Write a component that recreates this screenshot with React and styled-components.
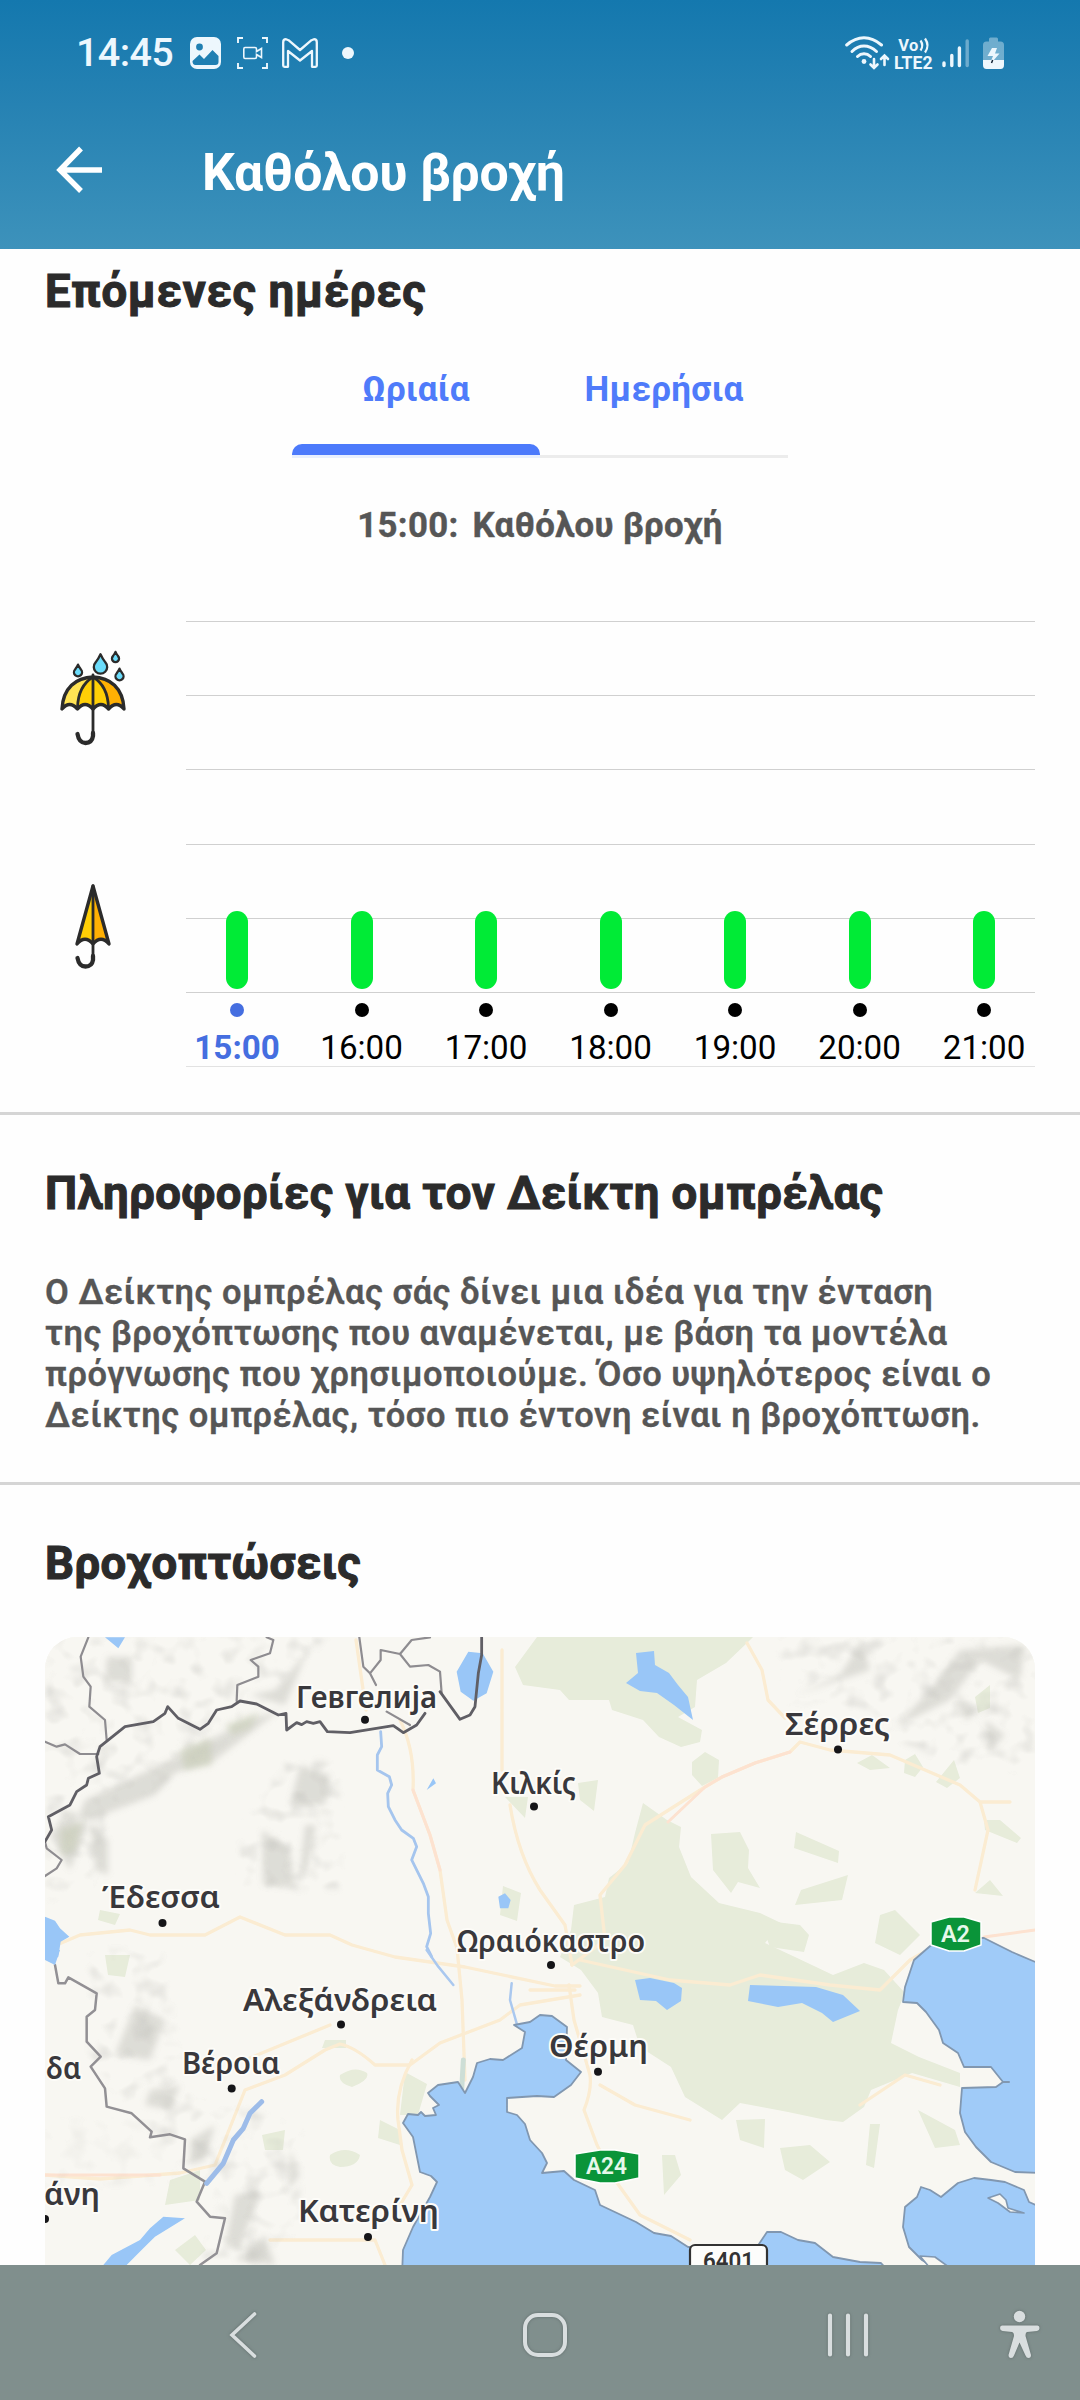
import React from "react";
import styled, { createGlobalStyle, css } from "styled-components";

const GlobalStyle = createGlobalStyle`
  *, *::before, *::after { box-sizing: border-box; }
  body { margin: 0; background: #fff; font-family: Roboto, "Noto Sans", sans-serif; }
  h1, h2, p { margin: 0; }
  button { border: 0; padding: 0; background: none; font: inherit; }
  svg { display: block; flex: none; }
`;

const Screen = styled.div`
  width: 1080px;
  height: 2400px;
  display: flex;
  flex-direction: column;
  overflow: hidden;
  background: #fefefe;
`;

/* ---------- header ---------- */

const Header = styled.header`
  flex: none;
  height: 249px;
  background: linear-gradient(#1478ae, #2682b3 42%, #3d92bb);
  color: #fff;
`;

const StatusBar = styled.div`
  height: 106px;
  padding: 0 76px 0 76px;
  display: flex;
  justify-content: space-between;
  align-items: center;
  color: #edf7fd;
`;

const StatusGroup = styled.div`
  display: flex;
  align-items: center;
  gap: ${(p) => p.$gap}px;
`;

const Spaced = styled.span`
  margin-left: ${(p) => p.$left}px;
`;

const Clock = styled.span`
  width: 98px;
  font-size: 39.5px;
  line-height: 46px;
  font-weight: 500;
  letter-spacing: -0.6px;
`;

const NotificationDot = styled.span`
  width: 12px;
  height: 12px;
  margin-left: 8px;
  border-radius: 50%;
  background: currentColor;
`;

const TitleRow = styled.div`
  height: 143px;
  padding: 0 56px;
  display: flex;
  align-items: flex-start;
`;

const BackButton = styled.button`
  width: 146px;
  padding-top: 40px;
`;

const PageTitle = styled.h1`
  padding-top: 36px;
  font-size: 51.8px;
  line-height: 62px;
  font-weight: 700;
  letter-spacing: -0.3px;
  white-space: nowrap;
`;

/* ---------- content ---------- */

const Content = styled.main`
  flex: 1;
  min-height: 0;
  overflow: hidden;
`;

const Section = styled.section`
  height: ${(p) => p.$height}px;
  padding: ${(p) => p.$top}px 45px 0;
  ${(p) =>
    p.$divided &&
    css`
      border-bottom: 3px solid #d5d5d5;
    `}
`;

const SectionTitle = styled.h2`
  font-size: 45.5px;
  line-height: 54px;
  font-weight: 700;
  letter-spacing: ${(p) => p.$tracking || 0.46}px;
  color: #2b2b2b;
  -webkit-text-stroke: 1.1px #2b2b2b;
  white-space: nowrap;
`;

const Tabs = styled.div`
  width: 496px;
  height: 110px;
  margin: 29px auto 0 247px;
  display: grid;
  grid-template-columns: 1fr 1fr;
`;

const Tab = styled.button`
  display: flex;
  flex-direction: column;
  align-items: center;
  justify-content: space-between;
  border-bottom: 3px solid ${(p) => (p.$active ? "#e8effe" : "#ececec")};
  padding-top: 21px;
  font-size: 35px;
  line-height: 41px;
  font-weight: 700;
  letter-spacing: 0.3px;
  color: #4f7bfa;

  &::after {
    content: "";
    width: 100%;
    height: 11px;
    border-radius: 10px 10px 0 0;
    background: ${(p) => (p.$active ? "#4c7afb" : "transparent")};
  }
`;

const Caption = styled.p`
  margin-top: 47px;
  height: 41px;
  display: flex;
  justify-content: center;
  gap: 14px;
  font-size: 34.8px;
  line-height: 41px;
  font-weight: 700;
  letter-spacing: 0.3px;
  color: #565656;
  -webkit-text-stroke: 0.4px #565656;
`;

const Chart = styled.div`
  margin-top: 75px;
  display: grid;
  grid-template-columns: 141px 849px;
`;

const Scale = styled.div`
  padding: 29px 0 0 14px;
  display: flex;
  flex-direction: column;
  gap: 136px;
`;

const Plot = styled.div`
  height: 447px;
  display: grid;
  grid-template-columns: 849px;
`;

const GridLines = styled.div`
  grid-area: 1 / 1;
  display: grid;
  grid-auto-rows: 74.2px;
  height: 447px;
  overflow: hidden;
`;

const GridLine = styled.span`
  border-top: 1px solid ${(p) => (p.$faint ? "#e2e2e2" : "#d0d0d0")};
`;

const Hours = styled.div`
  grid-area: 1 / 1;
  width: 871.5px;
  margin: 290px 0 0 -11.2px;
  display: grid;
  grid-template-columns: repeat(7, 1fr);
`;

const Hour = styled.div`
  display: flex;
  flex-direction: column;
  align-items: center;
  font-size: 33.2px;
  line-height: 38px;
  color: ${(p) => (p.$active ? "#456ee0" : "#000")};
  font-weight: ${(p) => (p.$active ? 700 : 400)};
`;

const Bar = styled.span`
  width: 22px;
  height: 78px;
  border-radius: 11px;
  background: #00eb36;
`;

const HourDot = styled.span`
  width: 14px;
  height: 14px;
  margin: 14px 0 12px;
  border-radius: 50%;
  background: currentColor;
`;

const Paragraph = styled.p`
  margin-top: 51px;
  font-size: 34.5px;
  line-height: 41px;
  font-weight: 600;
  letter-spacing: 0.51px;
  color: #565656;
  -webkit-text-stroke: 0.3px #565656;
  white-space: pre;
`;

const MapCard = styled.div`
  width: 990px;
  height: 628px;
  margin-top: 46px;
  overflow: hidden;
  border-radius: 32px 32px 0 0;
  background: #f8f7f2;
`;

/* ---------- system navigation ---------- */

const NavBar = styled.nav`
  flex: none;
  height: 135px;
  padding: 5px 36px 0 227px;
  display: flex;
  align-items: center;
  background: #808f8d;

  svg { filter: drop-shadow(0 0 1.5px rgba(60, 70, 70, 0.5)); }
`;

const NavButton = styled.button`
  width: ${(p) => p.$w}px;
`;

/* ---------- icons ---------- */

const ImageIcon = () => (
  <svg width="31" height="32" viewBox="0 0 31 32">
    <rect width="31" height="32" rx="7" fill="currentColor" />
    <circle cx="9.5" cy="10" r="3.4" fill="#1f7fb2" />
    <path d="M2.5 24 L9.5 17.5 L14 22 L22.5 13 L28.5 19 V25 Q28.5 28 25.5 28 H5.5 Q2.5 28 2.5 24Z" fill="#1f7fb2" />
  </svg>
);

const ScreenRecordIcon = () => (
  <svg width="31" height="32" viewBox="0 0 31 32" fill="none" stroke="currentColor" strokeWidth="1.9">
    <path d="M1 6V1H6M25 1H30V6M30 26V31H25M6 31H1V26" />
    <path d="M8 10.5H18Q19.5 10.5 19.5 12V14.5L24.5 11.5V20.5L19.5 17.5V20Q19.5 21.5 18 21.5H8Q6.8 21.5 6.8 20V12Q6.8 10.5 8 10.5Z" strokeWidth="1.6" />
  </svg>
);

const MailIcon = () => (
  <svg width="36" height="30" viewBox="0 0 36 30" fill="none" stroke="currentColor" strokeWidth="2.3" strokeLinejoin="round">
    <path d="M1.2 27.5V4.2Q1.2 1.2 4 1.2L6.5 2.2L18 12L29.5 2.2L32 1.2Q34.8 1.2 34.8 4.2V27.5Q34.8 28.8 33.5 28.8H30V13L18 22.5L6 13V28.8H2.5Q1.2 28.8 1.2 27.5Z" />
  </svg>
);

const WifiIcon = () => (
  <svg width="45" height="34" viewBox="0 0 45 34" fill="none" stroke="currentColor" strokeLinecap="round">
    <path d="M1.7 9 Q10 1.8 19 1.8 T36.5 9" strokeWidth="3" />
    <path d="M7 15.5 Q12.5 10 19 10 T31.5 15.5" strokeWidth="3" />
    <path d="M12.5 20.5 Q15.3 17.8 19 17.8 T25.5 20.5" strokeWidth="3" />
    <circle cx="19" cy="25.5" r="2.4" fill="currentColor" stroke="none" />
    <path d="M29 23V31M25.5 28.5L29 32L32.5 28.5M39.5 29V20M36 23L39.5 19.5L43 23" strokeWidth="2.6" />
  </svg>
);

const VolteIcon = () => (
  <svg width="39" height="40" viewBox="0 -3 39 40" fill="currentColor" fontFamily="Roboto, sans-serif" fontWeight="700">
    <text x="4.3" y="15" fontSize="16.5" textLength="20">Vo</text>
    <path d="M26.5 4.5Q30 9.5 26.5 14.5M31 2.5Q36 9.5 31 16.5" fill="none" stroke="currentColor" strokeWidth="2.2" />
    <text x="0" y="32.5" fontSize="17.5" textLength="38.5" lengthAdjust="spacingAndGlyphs">LTE2</text>
  </svg>
);

const SignalIcon = () => (
  <svg width="28" height="30" viewBox="0 0 28 30" stroke="currentColor" strokeWidth="3.4" strokeLinecap="round">
    <path d="M2 25V27.5M9.8 17.5V27.5M17.4 10V27.5" />
    <path d="M25.2 3V27.5" opacity=".38" />
  </svg>
);

const BatteryIcon = () => (
  <svg width="21" height="32" viewBox="0 0 21 32" fill="currentColor">
    <path d="M6 4.5V2Q6 .5 7.5 .5H13.5Q15 .5 15 2V4.5H17.5Q21 4.5 21 8V23H0V8Q0 4.5 3.5 4.5Z" opacity=".4" />
    <path d="M0 23H21V28Q21 32 17.5 32H3.5Q0 32 0 28Z" />
    <path d="M9 11H14L12 16.5H16.5L10 24H8L10 19H4.5Z" />
    <path d="M8.5 26L9.7 23" stroke="#123" strokeWidth="1.5" />
  </svg>
);

const ArrowBackIcon = () => (
  <svg width="47" height="47" viewBox="0 0 47 47" fill="none" stroke="#fff" strokeWidth="5.4">
    <path d="M25 2.5L4 24L25 45M4.5 24H46" />
  </svg>
);

const Drop = ({ x, y, s }) => (
  <path
    transform={`translate(${x} ${y}) scale(${s})`}
    d="M0 -9Q1.5 -5.5 4.5 -1.5A6.2 6.2 0 1 1 -4.5 -1.5Q-1.5 -5.5 0 -9Z"
    fill="#6bdcfb"
    stroke="#2b2b2b"
    strokeWidth={2.3 / s}
    strokeLinejoin="round"
  />
);

const OpenUmbrellaIcon = () => (
  <svg width="68" height="96" viewBox="0 0 68 96" fill="none" strokeLinecap="round" strokeLinejoin="round">
    <path d="M3 59Q3 29 34 27Q65 29 65 59Q58 51 50 59Q42 51 34 59Q26 51 18 59Q10 51 3 59Z" fill="#ffcf06" />
    <path d="M3 59Q3 30 34 27Q19 36 18 59Q10 51 3 59Z" fill="#ffe354" />
    <path d="M34 27Q65 30 65 59Q58 51 50 59Q49 36 34 27Z" fill="#ffb003" />
    <g stroke="#2b2b2b">
      <path d="M3 59C4 38 17 27.5 34 27C51 27.5 64 38 65 59Q57.5 50 49.5 59Q42 50 34 59Q26 50 18.5 59Q10.5 50 3 59Z" strokeWidth="3.4" />
      <path d="M18.5 58Q19 36 34 27Q49 36 49.5 58" strokeWidth="2.8" />
      <path d="M34 25V84" strokeWidth="2.8" />
      <path d="M34 83V86Q33 93 26.5 93T18.5 84" strokeWidth="4.3" />
    </g>
    <Drop x={41.5} y={14} s={1.08} />
    <Drop x={19} y={20.5} s={0.65} />
    <Drop x={56.5} y={7} s={0.57} />
    <Drop x={60.5} y={24.5} s={0.65} />
  </svg>
);

const ClosedUmbrellaIcon = () => (
  <svg width="68" height="88" viewBox="0 0 68 88" fill="none" strokeLinecap="round" strokeLinejoin="round">
    <path d="M34 4L18 62Q26 54 34 62Z" fill="#ffcf06" />
    <path d="M34 4L50 62Q42 54 34 62Z" fill="#ffb003" />
    <g stroke="#2b2b2b">
      <path d="M34 4L18 62Q26 52.5 34 62Q42 52.5 50 62Z" strokeWidth="3.4" />
      <path d="M34 4V76" strokeWidth="2.8" />
      <path d="M34 74V78Q33 84.5 26.5 84.5T18.5 76" strokeWidth="4.3" />
    </g>
  </svg>
);

/* ---------- map ---------- */

const cities = [
  ["Гевгелија", 296, 1707.5, 141, 365, 1719.7],
  ["Κιλκίς", 491, 1794, 85, 534, 1806.5],
  ["Σέρρες", 785, 1735, 105, 838, 1749.5],
  ["Έδεσσα", 102, 1907.5, 118, 162.5, 1923],
  ["Ωραιόκαστρο", 457, 1952, 188, 551, 1965],
  ["Αλεξάνδρεια", 243, 2010.5, 194, 341, 2024.5],
  ["Βέροια", 182, 2074, 98, 231.7, 2088.5],
  ["δα", 46, 2079, 35, 0, 0],
  ["Θέρμη", 549, 2057, 99, 598, 2071.7],
  ["άνη", 44, 2205, 56, 45, 2219],
  ["Κατερίνη", 298, 2221.5, 141, 368, 2237],
];

const MapLabels = styled.g`
  font-family: "Noto Sans", sans-serif;
  font-size: 30.5px;
  font-weight: 600;
  fill: #39383c;
  stroke: #fdfcf8;
  stroke-width: 4px;
  stroke-linejoin: round;
  paint-order: stroke;
`;

const ShieldText = styled.text`
  font-family: Roboto, sans-serif;
  font-size: 24px;
  font-weight: 600;
  fill: ${(p) => p.$color};
`;

const Tile = styled.g`
  & path { vector-effect: non-scaling-stroke; }
`;

const TerrainMap = () => (
  <svg width="990" height="628" viewBox="45 1637 990 628" fill="none" strokeLinejoin="round" strokeLinecap="round">
    <defs>
      <filter id="soft" x="-5%" y="-5%" width="110%" height="110%"><feGaussianBlur stdDeviation="3" /></filter>
      <filter id="slight" x="-5%" y="-5%" width="110%" height="110%"><feGaussianBlur stdDeviation="0.7" /></filter>
      <filter id="grain" x="0" y="0" width="100%" height="100%">
        <feTurbulence type="fractalNoise" baseFrequency="0.045 0.05" numOctaves="2" seed="8" />
        <feColorMatrix values="0 0 0 0 .5  0 0 0 0 .5  0 0 0 0 .47  2.2 0 0 0 -1.08" />
      </filter>
      <mask id="hills">
        <g filter="url(#soft)" fill="#fff">
          <path d="M45 1637H330L265 1700L200 1765L110 1810L90 1890L45 1900Z" />
          <path d="M285 1760H340V1890H240V1830Z" />
          <path d="M780 1637H1035V1770H960L900 1740L870 1710L780 1700Z" />
          <path d="M90 1950H160L190 2100L250 2110L300 2130V2230L270 2265H200L220 2200L150 2130L90 2060Z" />
          <path d="M45 2120H150L180 2180L45 2190Z" opacity=".5" />
        </g>
      </mask>
    </defs>
    <rect x="45" y="1637" width="990" height="628" fill="#f8f7f2" />

    <g filter="url(#slight)">
      <g fill="#e7ecda">
        <path d="M537 1637L515 1667L523 1685L560 1690L569 1700L609 1700L612 1710L643 1720L659 1737L681 1747L700 1742L702 1730L678 1717L695 1707L697 1680L726 1663L747 1643L753 1637Z" />
        <path d="M643 1803L667 1820L681 1827L679 1847L691 1877L719 1903L760 1913L781 1923L765 1943L795 1957L833 1975L864 1963L884 1970L905 1993L898 2010L891 2043L919 2057L960 2073V2087L912 2073L871 2090L864 2107L843 2122L826 2120L788 2112L740 2103L722 2120L685 2097L671 2067L640 2047L633 2025L602 2017L598 1993L581 1970L560 1957L571 1930L574 1905L605 1897L609 1878L628 1863L635 1833Z" />
        <path d="M711 1834L740 1832L749 1850L748 1868L760 1888L738 1882L731 1893L713 1870Z" />
        <path d="M796 1832L839 1851L838 1863L794 1848Z" />
        <path d="M801 1890L848 1875L842 1900L795 1905Z" />
        <path d="M760 1920L800 1925L809 1935L804 1952L770 1947ZM880 1915L895 1910L920 1935L900 1955L875 1943Z" />
        <path d="M857 1763L872 1755L890 1768L870 1770ZM905 1760L915 1754L923 1767L915 1777L904 1773ZM936 1782L954 1760L960 1778L947 1788ZM692 1762L705 1752L719 1760L718 1778L702 1786L692 1775ZM984 1820L1000 1820L1021 1838L1017 1843L985 1830ZM975 1893L990 1880L1003 1896Z" />
        <path d="M578 1783L598 1780L594 1811L580 1800ZM736 2120L765 2119L764 2148L740 2140ZM780 2148L810 2145L830 2162L803 2180L785 2170ZM870 2124L880 2124L874 2168L866 2165ZM662 2155L675 2155L681 2175L664 2195ZM918 2110L955 2130L960 2145L935 2148Z" />
        <path d="M340 2075Q355 2065 367 2073Q370 2080 352 2087Q338 2083 340 2075ZM330 2155Q345 2145 360 2155Q358 2167 340 2167Q328 2165 330 2155ZM262 2135L285 2130L283 2150L265 2150ZM405 2072L427 2084L418 2115L400 2115ZM380 2120L400 2130V2145L378 2138ZM325 2040L346 2040V2048L322 2048ZM503 1886L521 1893L517 1921L500 1915ZM105 1955L130 1955L125 1977L108 1975ZM175 2250L195 2235L206 2250L190 2265ZM505 1797L528 1797L525 1818Z" />
        <path d="M100 1910L120 1914L115 1925L98 1920ZM975 1697L990 1685V1708L978 1713ZM170 2180L200 2170V2200L165 2205Z" />
      </g>

      <g stroke="#fbecd2" strokeWidth="3.3">
        <path d="M45 1950L80 1935L130 1930L150 1935H205L240 1917L285 1935H330L352 1945L395 1957L465 1967L555 1986H580" />
        <path d="M45 2175L100 2179L180 2173L215 2165L245 2090L285 2075L325 2050L340 2044Q355 2047 375 2065H410L440 2043L500 2020L520 2005L580 1995" />
        <path d="M245 2060L330 2025M400 1720Q415 1750 413 1790L430 1835L440 1870L447 1920L457 1948L462 2000L465 2080M412 2060Q395 2090 398 2120L402 2150L412 2185L400 2205M510 1805Q518 1855 540 1890L565 1925L572 1965M569 1985L574 2020L590 2075Q592 2090 584 2110L597 2145L615 2180L640 2215L690 2240" />
        <path d="M502 1650V1770M356 1640L366 1710M600 2085L635 2105L690 2120M530 1990H575" />
        <path d="M572 1965L605 1940L600 1895L625 1865L645 1825L705 1787L722 1777L755 1763L790 1752L800 1742L830 1750L890 1755L960 1785L980 1802H1010M980 1802L988 1830L975 1890" />
        <path d="M580 1960L670 1980L730 1985L760 1975L830 1985L880 1990L910 1960L940 1943" />
        <path d="M747 1643L762 1670L768 1700L785 1718M270 2240L375 2240L385 2265M860 2105L905 2075L940 2085" />
      </g>
      <g stroke="#fde2d0" strokeWidth="3">
        <path d="M668 1822L705 1787L722 1777L755 1763L790 1752M413 1790L430 1835L440 1870M984 1937L1035 1930" />
        <path d="M45 2175L160 2175" />
      </g>

      <g fill="#bdbdb6" opacity=".45" filter="url(#soft)">
        <path d="M315 1637L300 1660L275 1690L250 1695L285 1705L310 1645ZM250 1720L215 1737L160 1765L85 1800L75 1825L155 1795L175 1773L215 1760L280 1710ZM50 1835L70 1810L88 1825L70 1870ZM90 1825L108 1840V1875L96 1870ZM107 1657H132V1682H105ZM300 1765L330 1775L325 1805H290ZM262 1830L290 1850L295 1888L263 1885ZM305 1825H316L307 1872H300Z" />
        <path d="M862 1640L840 1675L795 1695L870 1670ZM960 1650L1025 1645L1020 1680L980 1660L950 1700L895 1727L930 1690ZM985 1720L1005 1735L990 1750ZM955 1690L975 1715L965 1720Z" />
        <path d="M135 2005L165 2020L150 2060L115 2055ZM150 2090L180 2085L170 2110L145 2105ZM190 2140L215 2125L205 2160L190 2165ZM235 2195L260 2190L240 2250L225 2245ZM290 2150L300 2175L288 2190ZM235 2260L265 2235L275 2265Z" />
      </g>
      <rect x="45" y="1637" width="990" height="628" filter="url(#grain)" mask="url(#hills)" opacity=".45" />
      <g fill="#c7ccb6" opacity=".6" filter="url(#soft)">
        <path d="M60 1830L82 1822L75 1850L62 1855ZM180 1750L210 1738L212 1765L185 1770ZM225 1725L260 1712L250 1728L232 1735Z" />
      </g>

      <Tile transform="translate(40 1630) scale(.33333)">
        <g stroke="#8e8c90" strokeWidth="2.2">
          <path d="M145 22L122 80L130 140L152 170L148 230L195 270L200 330M15 335L50 350L75 343L120 372H175M590 213L592 165L655 140V110L632 90L690 70L700 30L680 22" />
          <path d="M958 22L970 110L990 130L1008 165M990 130L1022 90V60L1080 72L1110 110L1165 105L1200 125L1205 190M1080 72L1115 30L1170 22M1040 245L1110 285M15 635L20 655L65 690L50 715L15 738" />
        </g>
        <g fill="#99c6f7">
          <path d="M1285 65L1328 70L1360 125L1340 190L1300 212L1262 185L1250 125ZM195 22H255L235 55L215 38ZM15 860L45 872L60 895L88 920L62 935L55 980L40 990H15Z" />
          <path d="M1375 800L1395 790L1412 810L1405 835H1380ZM1160 480L1180 445L1188 460Z" />
        </g>
        <path d="M1022 305L1025 350L1012 375V420L1048 440L1055 465L1043 490L1045 530L1065 570L1085 600L1120 625L1130 650L1115 690L1150 760L1165 800V850L1172 910L1160 950L1175 980" stroke="#a5c5ee" strokeWidth="2.8" />
        <g stroke="#605e65" strokeWidth="2.8">
          <path d="M15 635L35 600L25 560L90 525L110 485L140 465L145 445L178 430L170 380L180 350L255 290L340 275L375 250L383 230L415 265L480 298L505 280L530 240L575 230L600 213L650 222L715 255L738 250L740 300L770 278L785 284L800 275L820 280L840 275L862 305L930 308L1060 287L1090 308L1130 285L1155 250" />
          <path d="M1200 185L1260 268L1290 255L1305 230L1315 130L1325 75V22" />
        </g>
      </Tile>

      <path d="M636 1653L654 1651L655 1665L669 1673L678 1685L688 1697L693 1720L674 1705L657 1693L640 1691L626 1683L638 1673Z" fill="#99c6f7" />
      <path d="M635 1980L650 1978L674 1983L682 1988L681 2001L667 2010L656 2001L640 2000ZM750 1985L816 1987L843 1995L860 2011L833 2022L822 2013L802 2003L778 2007L748 2001Z" fill="#99c6f7" />

      <Tile transform="translate(40 1950) scale(.33333)">
        <path d="M45 45L55 100H75L85 82L170 130L165 180L140 200V275L182 320L152 350L195 415L200 470L275 490L335 545L330 562L390 553L435 568L430 655L495 695L470 755L510 800L555 805L530 910L480 945" stroke="#929094" strokeWidth="2.5" />
        <path d="M15 0H60L45 45L15 30Z" fill="#99c6f7" />
        <path d="M665 455L630 490L610 535L580 570L550 640L500 700" stroke="#9dbce9" strokeWidth="5" />
        <path d="M435 805L370 800L330 835L300 870L215 915L190 945H260L310 895L345 860Z" fill="#99c6f7" />
        <path d="M1160 0L1195 50L1240 105M1415 100L1410 150L1430 220" stroke="#aac8ef" strokeWidth="2.5" />
        <path d="M1270 330L1265 420" stroke="#cdded6" strokeWidth="5" />
      </Tile>

      <g fill="#a0cbf8" stroke="#8197b0" strokeWidth="1.8">
        <path d="M402 2275L403 2250L413 2227L430 2197L437 2182L431 2176L420 2172L413 2137L403 2123L408 2114L418 2115L421 2112L425 2116L436 2115L433 2108L439 2105L430 2096L428 2093L438 2085L458 2082L465 2093L473 2077L477 2063L490 2059L503 2060L522 2048L525 2032L514 2025L530 2022L540 2015L552 2016L567 2027L566 2060L581 2072L571 2085L554 2097L537 2096L507 2098V2112L517 2115L525 2124L530 2140L542 2153L547 2163L542 2173L564 2171L574 2180L595 2190L600 2205L636 2222L654 2233L671 2236L688 2247H757L767 2232L781 2232L798 2240L815 2243L833 2257L860 2262L881 2263L892 2275Z" />
        <path d="M1040 1964L1012 1952L984 1938H940L929 1947L914 1960L905 1987L903 2002L917 2003L926 2012L939 2030L943 2043L958 2053L964 2067H978L991 2067L1003 2082L996 2087L962 2088L960 2113L965 2132L976 2147L991 2162L1015 2172L1040 2173Z" />
        <path d="M1040 2207L1029 2202L1024 2190L1005 2182L991 2180L974 2178L958 2183L941 2197L930 2190L921 2187L917 2197L905 2207L903 2227L909 2247L922 2260L946 2275H1040Z" />
      </g>
      <path d="M988 2198L1000 2194L1006 2200L1008 2208L1024 2213L1010 2212L998 2203ZM920 2256L935 2257L950 2268H930Z" fill="#f8f7f2" stroke="#8197b0" strokeWidth="1.6" />
      <path d="M1003 2082L1009 2082" stroke="#8197b0" strokeWidth="2" />
    </g>

    <MapLabels>
      {cities.map(([name, x, y, width]) => (
        <text key={name} x={x} y={y} textLength={width} lengthAdjust="spacingAndGlyphs">{name}</text>
      ))}
    </MapLabels>
    {cities.map(([name, , , , cx, cy]) => (
      <circle key={name} cx={cx} cy={cy} r="4" fill="#151518" />
    ))}

    <path d="M931 1922L949 1917H964L981 1922V1945L964 1951H949L931 1945Z" fill="#0a9439" stroke="#fff" strokeWidth="1.5" />
    <ShieldText x="941" y="1941.5" textLength="29" lengthAdjust="spacingAndGlyphs" $color="#e6f8ea">A2</ShieldText>
    <path d="M575 2154L600 2150H615L639 2154V2178L615 2183H600L575 2178Z" fill="#0a9439" stroke="#fff" strokeWidth="1.5" />
    <ShieldText x="586" y="2174" textLength="41" lengthAdjust="spacingAndGlyphs" $color="#e6f8ea">A24</ShieldText>
    <rect x="690" y="2245" width="77" height="36" rx="5" fill="#fdfdfb" stroke="#333" strokeWidth="2.2" />
    <ShieldText x="703" y="2269" textLength="51" lengthAdjust="spacingAndGlyphs" $color="#333">6401</ShieldText>
  </svg>
);

/* ---------- page ---------- */

const hours = ["15:00", "16:00", "17:00", "18:00", "19:00", "20:00", "21:00"];

const about = `Ο Δείκτης ομπρέλας σάς δίνει μια ιδέα για την ένταση
της βροχόπτωσης που αναμένεται, με βάση τα μοντέλα
πρόγνωσης που χρησιμοποιούμε. Όσο υψηλότερος είναι ο
Δείκτης ομπρέλας, τόσο πιο έντονη είναι η βροχόπτωση.`;

export default function App() {
  return (
    <Screen>
      <GlobalStyle />
      <Header>
        <StatusBar>
          <StatusGroup $gap={16}>
            <Clock>14:45</Clock>
            <ImageIcon />
            <ScreenRecordIcon />
            <Spaced $left={-2}><MailIcon /></Spaced>
            <NotificationDot />
          </StatusGroup>
          <StatusGroup $gap={4}>
            <WifiIcon />
            <VolteIcon />
            <Spaced $left={5}><SignalIcon /></Spaced>
            <Spaced $left={9}><BatteryIcon /></Spaced>
          </StatusGroup>
        </StatusBar>
        <TitleRow>
          <BackButton aria-label="Πίσω"><ArrowBackIcon /></BackButton>
          <PageTitle>Καθόλου βροχή</PageTitle>
        </TitleRow>
      </Header>

      <Content>
        <Section $height={866} $top={16} $divided>
          <SectionTitle $tracking={0.7}>Επόμενες ημέρες</SectionTitle>
          <Tabs>
            <Tab $active>Ωριαία</Tab>
            <Tab>Ημερήσια</Tab>
          </Tabs>
          <Caption><span>15:00:</span><span>Καθόλου βροχή</span></Caption>
          <Chart>
            <Scale>
              <OpenUmbrellaIcon />
              <ClosedUmbrellaIcon />
            </Scale>
            <Plot>
              <GridLines>
                {[0, 1, 2, 3, 4, 5, 6].map((n) => (
                  <GridLine key={n} $faint={n === 6} />
                ))}
              </GridLines>
              <Hours>
                {hours.map((hour, i) => (
                  <Hour key={hour} $active={i === 0}>
                    <Bar />
                    <HourDot />
                    <span>{hour}</span>
                  </Hour>
                ))}
              </Hours>
            </Plot>
          </Chart>
        </Section>

        <Section $height={370} $top={52} $divided>
          <SectionTitle>Πληροφορίες για τον Δείκτη ομπρέλας</SectionTitle>
          <Paragraph>{about}</Paragraph>
        </Section>

        <Section $height={780} $top={52}>
          <SectionTitle>Βροχοπτώσεις</SectionTitle>
          <MapCard><TerrainMap /></MapCard>
        </Section>
      </Content>

      <NavBar>
        <NavButton $w={295}>
          <svg width="34" height="50" viewBox="0 0 34 50" fill="none" stroke="#d9dedf" strokeWidth="3.6" strokeLinecap="round">
            <path d="M27.5 4L5 25L27.5 46" />
          </svg>
        </NavButton>
        <NavButton $w={304}>
          <svg width="46" height="48" viewBox="0 0 46 48" fill="none" stroke="#d9dedf" strokeWidth="4">
            <rect x="3" y="4" width="40" height="40" rx="13" />
          </svg>
        </NavButton>
        <NavButton $w={171}>
          <svg width="46" height="50" viewBox="0 0 46 50" fill="none" stroke="#d9dedf" strokeWidth="4.2" strokeLinecap="round">
            <path d="M4 5.5V44.5M22 5.5V44.5M40 5.5V44.5" />
          </svg>
        </NavButton>
        <NavButton $w={46}>
          <svg width="46" height="54" viewBox="0 0 46 54" fill="#d9dedf">
            <circle cx="22.5" cy="8.5" r="5.7" />
            <path d="M5 17.5H40.5Q42.5 17.5 42.5 20Q42.5 22.5 40 23L30 24Q28.5 24.5 28.5 28L34 47Q34 50 31.5 50Q29.5 50 28.5 47.5L22.5 34.5L17 47.5Q16 50 14 50Q11.5 50 11.5 47L17 28Q17 24.5 15 24L5.5 23Q3 22.5 3 20Q3 17.5 5 17.5Z" />
          </svg>
        </NavButton>
      </NavBar>
    </Screen>
  );
}
